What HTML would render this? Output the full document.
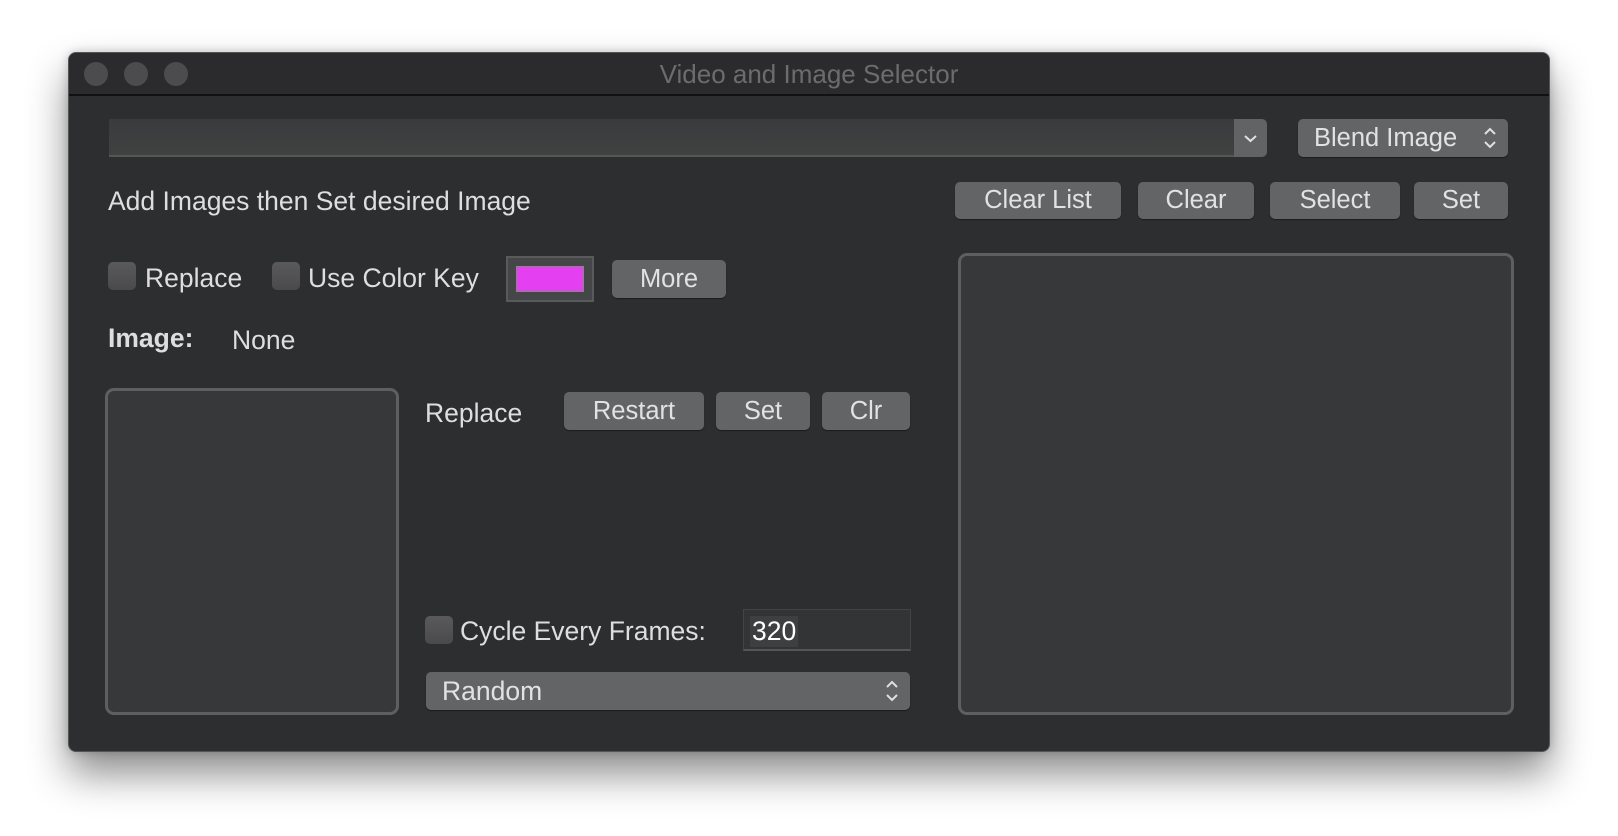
<!DOCTYPE html>
<html><head><meta charset="utf-8"><style>
*{margin:0;padding:0;box-sizing:border-box}
body{width:1618px;height:836px;background:#fff;position:relative;overflow:hidden;font-family:"Liberation Sans",Arial,sans-serif;color:#dcdcdc}
.win{position:absolute;left:68px;top:52px;width:1482px;height:700px;background:#2d2e30;border-radius:8px;border:1px solid #555;box-shadow:0 22px 40px rgba(0,0,0,.45),0 0 10px rgba(0,0,0,.2);overflow:hidden}
.tb{position:absolute;left:0;top:0;width:100%;height:43px;background:#2b2b2d;border-bottom:2px solid #111}
.tl{position:absolute;top:9px;width:24px;height:24px;border-radius:50%;background:#4c4c4e}
.title{position:absolute;left:0;width:100%;top:6px;text-align:center;font-size:26px;color:#6c6c6c}
.a{position:absolute}
.btn{position:absolute;background:#636466;border-radius:5px;color:#e2e2e2;font-size:25.5px;text-align:center;box-shadow:0 1px 1px rgba(0,0,0,.4)}
.lbl{position:absolute;font-size:26.5px;color:#dedede;white-space:nowrap}
.cb{position:absolute;width:28px;height:28px;border-radius:5px;background:linear-gradient(#5a5a5c,#4a4a4c)}
.box{position:absolute;background:#37383a;border:3px solid #5e5f61;border-radius:9px}
</style></head><body>
<div class="win">
<div class="tb"><div class="tl" style="left:15px"></div><div class="tl" style="left:55px"></div><div class="tl" style="left:95px"></div><div class="title">Video and Image Selector</div></div>
</div>
<div class="a" style="left:109px;top:119px;width:1126px;height:38px;background:linear-gradient(#3a3b3c,#404141);border-bottom:2px solid #555"></div>
<div class="a" style="left:1234px;top:119px;width:33px;height:38px;background:#626365;border-radius:0 5px 5px 0"><svg width="33" height="38"><path d="M11 17l5.5 5 5.5-5" stroke="#e0e0e0" stroke-width="2" fill="none"/></svg></div>
<div class="btn" style="left:1298px;top:119px;width:210px;height:38px;line-height:38px;text-align:left;padding-left:16px">Blend Image<svg style="position:absolute;right:10px;top:6px" width="16" height="26"><path d="M3 9l5-5 5 5M3 17l5 5 5-5" stroke="#e0e0e0" stroke-width="2" fill="none"/></svg></div>
<div class="lbl" style="left:108px;top:186px">Add Images then Set desired Image</div>
<div class="btn" style="left:955px;top:182px;width:166px;height:37px;line-height:37px">Clear List</div>
<div class="btn" style="left:1138px;top:182px;width:116px;height:37px;line-height:37px">Clear</div>
<div class="btn" style="left:1270px;top:182px;width:130px;height:37px;line-height:37px">Select</div>
<div class="btn" style="left:1414px;top:182px;width:94px;height:37px;line-height:37px">Set</div>
<div class="cb" style="left:108px;top:262px"></div>
<div class="lbl" style="left:145px;top:263px">Replace</div>
<div class="cb" style="left:272px;top:262px"></div>
<div class="lbl" style="left:308px;top:263px">Use Color Key</div>
<div class="a" style="left:506px;top:256px;width:88px;height:46px;background:#454648;border:2px solid #5a5a5c"></div>
<div class="a" style="left:516px;top:266px;width:68px;height:26px;background:#e43ff1;border:1px solid #888"></div>
<div class="btn" style="left:612px;top:260px;width:114px;height:38px;line-height:38px">More</div>
<div class="lbl" style="left:108px;top:323px;font-weight:bold">Image:</div>
<div class="lbl" style="left:232px;top:325px">None</div>
<div class="box" style="left:105px;top:388px;width:294px;height:327px"></div>
<div class="lbl" style="left:425px;top:398px">Replace</div>
<div class="btn" style="left:564px;top:392px;width:140px;height:38px;line-height:38px">Restart</div>
<div class="btn" style="left:716px;top:392px;width:94px;height:38px;line-height:38px">Set</div>
<div class="btn" style="left:822px;top:392px;width:88px;height:38px;line-height:38px">Clr</div>
<div class="cb" style="left:425px;top:616px"></div>
<div class="lbl" style="left:460px;top:616px">Cycle Every Frames:</div>
<div class="a" style="left:743px;top:609px;width:168px;height:42px;background:#333436;border:1px solid #444;border-bottom:2px solid #555"></div>
<div class="lbl" style="left:750px;top:616px;color:#fff;background:#3e3f40;padding:0 2px">320</div>
<div class="btn" style="left:426px;top:672px;width:484px;height:38px;line-height:38px;text-align:left;padding-left:16px;font-size:26.5px">Random<svg style="position:absolute;right:10px;top:6px" width="16" height="26"><path d="M3 9l5-5 5 5M3 17l5 5 5-5" stroke="#e0e0e0" stroke-width="2" fill="none"/></svg></div>
<div class="box" style="left:958px;top:253px;width:556px;height:462px"></div>
</body></html>
